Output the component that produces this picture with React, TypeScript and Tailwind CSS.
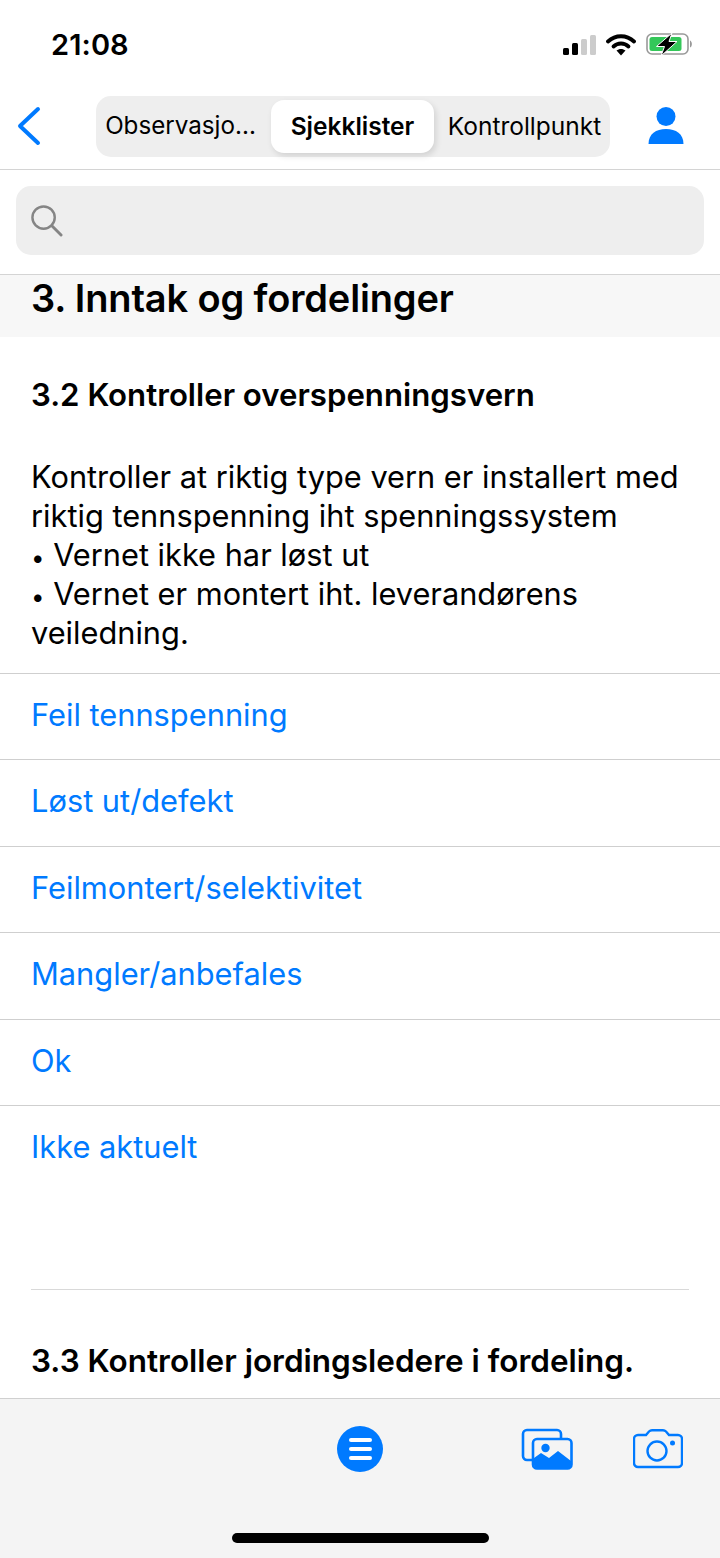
const options = ["Feil tennspenning", "Løst ut/defekt", "Feilmontert/selektivitet", "Mangler/anbefales", "Ok", "Ikke aktuelt"]

const StatusIcons = () => (
    <div className="flex items-center gap-[10px]">
        <svg width="33" height="20" viewBox="0 0 33 20">
            <rect x="0" y="13" width="6" height="7" rx="1.500" fill="#000" />
            <rect x="9" y="8" width="6" height="12" rx="1.500" fill="#000" />
            <rect x="18" y="4" width="6" height="16" rx="1.500" fill="#ccc" />
            <rect x="27" y="0" width="6" height="20" rx="1.500" fill="#ccc" />
        </svg>
        <svg width="30" height="22" viewBox="0 0 30 22">
            <path d="M2 7.500C9.500 .5 20.500 .5 28 7.500" fill="none" stroke="#000" strokeWidth="3.800" strokeLinecap="round" />
            <path d="M7.500 12.500C11.800 8.500 18.200 8.500 22.500 12.500" fill="none" stroke="#000" strokeWidth="3.800" strokeLinecap="round" />
            <path d="M10.500 16.500C13 14.400 17 14.400 19.500 16.500L15 21.500Z" fill="#000" />
        </svg>
        <svg width="47" height="23" viewBox="0 0 47 23">
            <rect x="1" y="1" width="41" height="20" rx="5" fill="none" stroke="#999" strokeWidth="1.600" />
            <rect x="3.500" y="4" width="32" height="14" rx="2.500" fill="#34c759" />
            <path d="M44 7.500C46.500 8.500 46.500 13.500 44 14.500Z" fill="#999" />
            <path d="M26 0L10.500 13.500H18.500L15 23L31 8.500H23Z" fill="#000" stroke="#fff" strokeWidth="1" />
        </svg>
    </div>
)

const GalleryIcon = () => (
    <svg width="52" height="42" viewBox="0 0 52 42">
        <path d="M11 32H6a4 4 0 0 1-4-4V6a4 4 0 0 1 4-4h30a4 4 0 0 1 4 4v4" fill="none" stroke="#007aff" strokeWidth="2.600" />
        <rect x="12" y="11" width="38.500" height="29.500" rx="4" fill="none" stroke="#007aff" strokeWidth="2.600" />
        <circle cx="24.500" cy="20" r="4.200" fill="#007aff" />
        <path d="M13 30L20 25L28 30L37 23L50 33V37a3 3 0 0 1-3 3H16a3 3 0 0 1-3-3Z" fill="#007aff" />
    </svg>
)

const CameraIcon = () => (
    <svg width="50" height="40" viewBox="0 0 50 40">
        <path d="M5 6H13L16 2.500C17 1.500 18 1.200 19 1.200H30C31 1.200 32 1.500 33 2.500L36 6H45A4 4 0 0 1 49 10V34A4 4 0 0 1 45 38H5A4 4 0 0 1 1 34V10A4 4 0 0 1 5 6Z" fill="none" stroke="#007aff" strokeWidth="2.400" />
        <circle cx="24" cy="22" r="9.500" fill="none" stroke="#007aff" strokeWidth="2.400" />
        <circle cx="39.500" cy="14" r="2.500" fill="#007aff" />
    </svg>
)

const App = () => {
    return (
        <div className="w-[720px] h-[1558px] flex flex-col bg-white overflow-hidden text-black font-['Inter','Liberation_Sans',sans-serif]">
            <div className="h-[84px] shrink-0 flex items-center justify-between pl-[51px] pr-[27px] pt-[5px]">
                <span className="text-[29px] font-semibold tracking-[0.1px]">21:08</span>
                <StatusIcons />
            </div>

            <div className="h-[86px] shrink-0 flex items-center border-b border-[#d4d4d4] pb-[1px]">
                <div className="w-[96px] pl-[16px]">
                    <svg width="26" height="40" viewBox="0 0 26 40">
                        <path d="M22 3L4 20L22 37" fill="none" stroke="#007aff" strokeWidth="4" strokeLinecap="round" strokeLinejoin="round" />
                    </svg>
                </div>
                <div className="w-[514px] h-[61px] rounded-[15px] bg-[#eeeeee] flex items-center px-[4px] text-[24.500px]">
                    <div className="w-[171px] pr-[10px] text-center text-[24.200px]">Observasjo...</div>
                    <div className="w-[163px] h-[53px] rounded-[13px] bg-white shadow-[2px_3px_6px_rgba(0,0,0,0.12)] flex items-center justify-center font-semibold">Sjekklister</div>
                    <div className="flex-1 pl-[9px] text-center whitespace-nowrap">Kontrollpunkt</div>
                </div>
                <div className="flex-1 flex justify-center pl-[2px]">
                    <svg width="36" height="38" viewBox="0 0 36 38">
                        <circle cx="18" cy="9.500" r="9.500" fill="#007aff" />
                        <path d="M0.500 37C0.500 27 8 22 18 22C28 22 35.500 27 35.500 37Z" fill="#007aff" />
                    </svg>
                </div>
            </div>

            <div className="h-[105px] shrink-0 px-[16px] pt-[16px] border-b border-[#d4d4d4]">
                <div className="h-[69px] rounded-[15px] bg-[#eeeeee] flex items-center pl-[14px]">
                    <svg width="33" height="33" viewBox="0 0 34 34">
                        <circle cx="14" cy="14" r="11.500" fill="none" stroke="#858585" strokeWidth="2.500" />
                        <path d="M22.500 22.500L32 32" fill="none" stroke="#858585" strokeWidth="3" strokeLinecap="round" />
                    </svg>
                </div>
            </div>

            <div className="h-[62px] shrink-0 bg-[#f7f7f7] pl-[31px] pt-[1px] text-[38px] leading-[44px] font-semibold tracking-[-0.15px]">3. Inntak og fordelinger</div>

            <div className="flex-1 min-h-0 flex flex-col">
                <h2 className="pl-[31px] pt-[40px] text-[31.200px] leading-[36px] font-semibold">3.2 Kontroller overspenningsvern</h2>
                <p className="pl-[31px] pr-[24px] pt-[44px] h-[260px] text-[30.750px] leading-[39px] font-normal">
                    Kontroller at riktig type vern er installert med riktig tennspenning iht spenningssystem<br />
                    <span className="text-[24px] leading-none">•</span> Vernet ikke har løst ut<br />
                    <span className="text-[24px] leading-none">•</span> Vernet er montert iht. leverandørens veiledning.
                </p>
                {options.map(option => (
                    <div key={option} className="h-[86.400px] shrink-0 border-t border-[#cfcfcf] pl-[31px] pb-[3px] flex items-center text-[30.800px] text-[#007aff]">{option}</div>
                ))}
                <div className="mx-[31px] mt-[98px] border-t border-[#d9d9d9]" />
                <h2 className="pl-[31px] pt-[53px] text-[31.500px] leading-[36px] font-semibold">3.3 Kontroller jordingsledere i fordeling.</h2>
            </div>

            <div className="h-[160px] shrink-0 bg-[#f4f4f4] border-t border-[#d0d0d0] relative">
                <div className="flex items-center h-[102px] pb-[2px]">
                    <div className="ml-[337px] w-[46px] h-[46px] rounded-full bg-[#007aff] flex flex-col items-center justify-center gap-[4.500px]">
                        <div className="w-[23px] h-[4.500px] rounded-full bg-white" />
                        <div className="w-[23px] h-[4.500px] rounded-full bg-white" />
                        <div className="w-[23px] h-[4.500px] rounded-full bg-white" />
                    </div>
                    <div className="ml-[138px]"><GalleryIcon /></div>
                    <div className="ml-[60px]"><CameraIcon /></div>
                </div>
                <div className="absolute left-[232px] top-[134px] w-[257px] h-[10px] rounded-full bg-black" />
            </div>
        </div>
    )
}

export default App
